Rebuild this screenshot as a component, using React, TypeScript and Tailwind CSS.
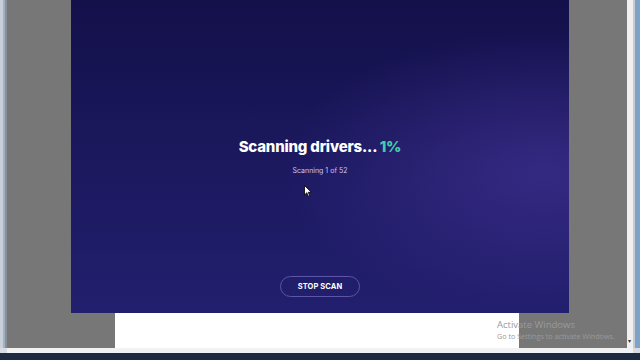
import React from "react";

export default function App() {
  return (
    <div className="relative w-[640px] h-[360px] overflow-hidden bg-[#d9dde3] flex flex-col" style={{ fontFamily: "Inter, 'Open Sans', sans-serif" }}>
      <div className="flex h-[348px]">
        <div className="w-[7px] flex">
          <div className="w-[3px] bg-[#c9d0d8]" />
          <div className="w-[2px] bg-[#9fb3c8]" />
          <div className="w-[2px] bg-[#8a8f96]" />
        </div>
        <div className="w-[620px] bg-[#777777] flex flex-col">
          <div className="ml-[64px] w-[498px] h-[313px] relative overflow-hidden bg-[linear-gradient(180deg,#13104a_0%,#1c1960_55%,#221f6e_100%)]">
            <div className="absolute inset-0 bg-[radial-gradient(ellipse_75%_65%_at_95%_55%,rgba(78,58,165,0.5),rgba(78,58,165,0)_70%)]" />
            <div className="relative flex flex-col items-center h-full">
              <div className="mt-[137px] text-[15px] font-extrabold text-white tracking-[-0.2px] leading-[20px]">
                Scanning drivers... <span className="text-[#3fcfae]">1%</span>
              </div>
              <div className="mt-[9px] text-[7px] text-[#c9c4ee] leading-[9px]">Scanning 1 of 52</div>
              <div className="mt-[101px] w-[80px] h-[21px] rounded-full border border-[#5d55a8] flex items-center justify-center text-[7.5px] font-bold text-white tracking-[0.1px]">
                STOP SCAN
              </div>
            </div>
            <svg className="absolute left-[233px] top-[185px]" width="8" height="12" viewBox="0 0 8 12">
              <path d="M0.5 0.5 L0.5 10 L2.8 7.8 L4.3 11.2 L5.7 10.6 L4.2 7.3 L7.3 7.3 Z" fill="#fff" stroke="#000" strokeWidth="0.8" />
            </svg>
          </div>
          <div className="ml-[108px] w-[404px] h-[35px] bg-white" />
        </div>
        <div className="w-[6px] bg-[#f0f0f0] relative">
          <div className="absolute left-[1px] bottom-[4px] text-[6px] leading-[6px] text-[#333]">▾</div>
        </div>
        <div className="w-[7px] flex">
          <div className="w-[2px] bg-[#c8ccd2]" />
          <div className="w-[5px] bg-[#7ea3c9]" />
        </div>
      </div>
      <div className="h-[5px] bg-[#f2f2f2] ml-[7px] mr-[7px]" />
      <div className="flex-1 bg-[#1c2a44]" />
      <div className="absolute left-[497px] top-[320px] text-[#9a9a9a] leading-none" style={{ fontFamily: "'Open Sans', sans-serif" }}>
        <div className="text-[9.5px]">Activate Windows</div>
        <div className="text-[7.2px] mt-[3px]">Go to Settings to activate Windows.</div>
      </div>
    </div>
  );
}
